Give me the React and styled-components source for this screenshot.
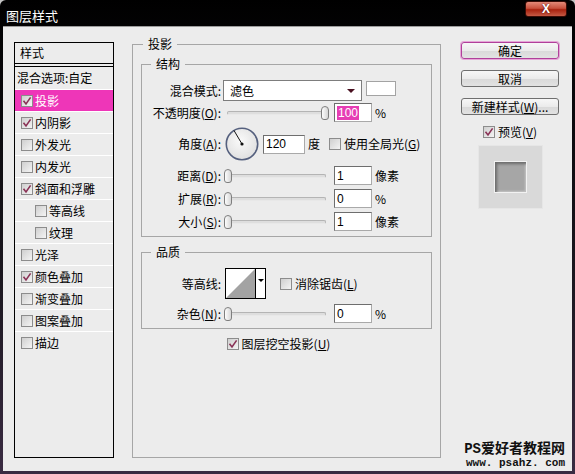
import React from 'react';
import styled, { createGlobalStyle } from 'styled-components';

const GlobalStyle = createGlobalStyle`
  html, body {
    margin: 0;
    padding: 0;
    background: #c4c4c4;
  }
  body {
    font-family: "Liberation Sans", "Noto Sans CJK SC", sans-serif;
    font-size: 12px;
    color: #000;
  }
`;

const Window = styled.div`
  width: 575px;
  height: 474px;
  box-sizing: border-box;
  display: flex;
  flex-direction: column;
  padding: 0 3px 3px;
  background: linear-gradient(180deg, #000 0%, #1c1820 60%, #3a2b42 100%);
  border-radius: 6px 6px 0 0;
  overflow: hidden;
`;

const TitleBar = styled.div`
  height: 27px;
  flex-shrink: 0;
  display: flex;
  justify-content: space-between;
  align-items: flex-start;
  border-bottom: 1px solid #9c9c9c;
  box-sizing: border-box;
`;

const Title = styled.span`
  color: #fff;
  font-family: "Noto Sans CJK SC", sans-serif;
  font-size: 13px;
  line-height: 16px;
  padding: 8px 0 0 3px;
`;

const CloseButton = styled.div`
  width: 42px;
  height: 16px;
  margin: 1px 5px 0 0;
  box-sizing: border-box;
  border: 1px solid #3a0c06;
  border-radius: 3px;
  background: linear-gradient(180deg, #e48a78 0%, #c8503c 45%, #a8220f 55%, #c55a44 100%);
  color: #fff;
  font-family: "Liberation Sans", sans-serif;
  font-weight: bold;
  font-size: 12px;
  line-height: 14px;
  text-align: center;
  text-shadow: 0 0 2px #400;
`;

const Body = styled.div`
  flex: 1;
  display: flex;
  background: #ececec;
  padding: 9px 13px 13px 11px;
  min-height: 0;
`;

const StyleList = styled.div`
  width: 100px;
  box-sizing: border-box;
  margin-top: 6px;
  border: 1px solid #000;
  display: flex;
  flex-direction: column;
  flex-shrink: 0;
`;

const ListHeader = styled.div`
  height: 20px;
  line-height: 20px;
  padding-left: 5px;
  border-bottom: 4px double #000;
  font-family: "Noto Sans CJK SC", sans-serif;
`;

const BlendRow = styled.div`
  height: 22px;
  line-height: 22px;
  padding-left: 2px;
  font-family: "Noto Sans CJK SC", sans-serif;
`;

const ListItem = styled.div`
  height: 22px;
  box-sizing: border-box;
  border-top: 1px solid #fff;
  display: flex;
  align-items: center;
  gap: 2px;
  padding-left: ${p => (p.$sub ? 20 : 6)}px;
  background: ${p => (p.$active ? '#ee36b8' : 'transparent')};
  color: ${p => (p.$active ? '#fff' : '#000')};
  font-family: "Noto Sans CJK SC", sans-serif;
  line-height: 14px;
`;

const BoxWrap = styled.span`
  display: inline-flex;
  align-items: center;
  justify-content: center;
  width: 12px;
  height: 12px;
  box-sizing: border-box;
  flex-shrink: 0;
  border: 1px solid #8c8c8c;
  background: linear-gradient(135deg, #cfcfcf 0%, #f4f4f4 100%);
`;

const Middle = styled.fieldset`
  width: 309px;
  box-sizing: border-box;
  margin: 0 0 0 18px;
  padding: 0 8px;
  border: 1px solid #a6a6a6;
  min-width: 0;
  flex-shrink: 0;
  display: flex;
  flex-direction: column;
`;

const Legend = styled.legend`
  padding: 0 5px;
  margin-left: ${p => p.$offset || 0}px;
  line-height: 16px;
  font-family: "Noto Sans CJK SC", sans-serif;
`;

const Group = styled.fieldset`
  margin: ${p => p.$top}px 0 0;
  padding: 0 6px ${p => p.$bottom}px;
  border: 1px solid #a6a6a6;
  min-width: 0;
  display: flex;
  flex-direction: column;
`;

const Row = styled.div`
  display: flex;
  align-items: center;
  height: ${p => p.$h}px;
  margin-top: ${p => p.$mt}px;
`;

const Label = styled.span`
  width: 73px;
  flex-shrink: 0;
  text-align: right;
  white-space: nowrap;
  font-family: "Noto Sans CJK SC", sans-serif;
  line-height: 14px;
  margin-right: 2px;
`;

const Text = styled.span`
  white-space: nowrap;
  font-family: "Noto Sans CJK SC", sans-serif;
  line-height: 14px;
  margin-left: ${p => p.$ml || 0}px;
`;

const Select = styled.div`
  width: 139px;
  height: 21px;
  box-sizing: border-box;
  border: 1px solid #7d7d7d;
  background: #fff;
  display: flex;
  align-items: center;
  justify-content: space-between;
  padding: 0 6px 0 6px;
  font-family: "Noto Sans CJK SC", sans-serif;
`;

const Arrow = styled.span`
  width: 0;
  height: 0;
  border-left: ${p => p.$size || 4}px solid transparent;
  border-right: ${p => p.$size || 4}px solid transparent;
  border-top: ${p => p.$size || 4}px solid ${p => p.$color || '#4a1020'};
`;

const Swatch = styled.div`
  width: 30px;
  height: 15px;
  margin: -4px 0 0 4px;
  box-sizing: border-box;
  border: 1px solid #a3a3a3;
  background: #fff;
`;

const SliderBox = styled.div`
  position: relative;
  width: 106px;
  height: 14px;
  margin-left: 1px;
  flex-shrink: 0;
`;

const Track = styled.div`
  position: absolute;
  left: 3px;
  right: 4px;
  top: 5px;
  height: 4px;
  box-sizing: border-box;
  border: 1px solid #b4b4b4;
  border-bottom-color: #e8e8e8;
  background: #dedede;
  border-radius: 2px;
`;

const Thumb = styled.div`
  position: absolute;
  top: 0;
  width: 8px;
  height: 14px;
  box-sizing: border-box;
  border: 1px solid #7e7e7e;
  border-radius: 4px 4px 3px 3px;
  background: linear-gradient(90deg, #fdfdfd, #d6d6d6);
`;

const NumInput = styled.div`
  width: ${p => p.$w || 38}px;
  height: 19px;
  box-sizing: border-box;
  margin-left: ${p => p.$ml || 4}px;
  border: 1px solid #6e6e6e;
  border-right-color: #a9a9a9;
  border-bottom-color: #a9a9a9;
  background: #fff;
  padding-left: 2px;
  display: flex;
  align-items: center;
  font-size: 12px;
  line-height: 14px;
  flex-shrink: 0;
`;

const Selected = styled.span`
  background: #e63db4;
  color: #fff;
  padding: 0 1px;
`;

const Unit = styled.span`
  margin-left: 3px;
  font-family: "Noto Sans CJK SC", sans-serif;
  line-height: 14px;
`;

const DialBox = styled.div`
  width: 34px;
  height: 34px;
  margin-left: 2px;
  flex-shrink: 0;
`;

const Contour = styled.div`
  width: 41px;
  height: 31px;
  box-sizing: border-box;
  border: 1px solid #000;
  display: flex;
  background: #fff;
  margin-left: 2px;
`;

const ContourArrow = styled.div`
  width: 10px;
  border-left: 1px solid #000;
  display: flex;
  align-items: center;
  justify-content: center;
  padding-bottom: 6px;
  box-sizing: border-box;
`;

const CheckRow = styled.div`
  display: flex;
  align-items: center;
  justify-content: ${p => (p.$center ? 'center' : 'flex-start')};
  gap: 3px;
  height: ${p => p.$h || 16}px;
  margin-top: ${p => p.$mt || 0}px;
  margin-left: ${p => p.$ml || 0}px;
  padding-right: ${p => p.$pr || 0}px;
`;

const RightCol = styled.div`
  width: 98px;
  margin-left: 20px;
  margin-top: 6px;
  display: flex;
  flex-direction: column;
  flex-shrink: 0;
`;

const Button = styled.div`
  height: 17px;
  box-sizing: border-box;
  margin-top: ${p => p.$mt || 0}px;
  border: 1px solid ${p => (p.$primary ? '#b0409a' : '#6f6f6f')};
  box-shadow: ${p => (p.$primary ? '0 0 0 1px #e6a6d8' : 'none')};
  border-radius: 3px;
  background: linear-gradient(180deg, #f7f7f7 0%, #ebebeb 50%, #d9d9d9 51%, #e2e2e2 100%);
  text-align: center;
  line-height: 15px;
  font-family: "Noto Sans CJK SC", sans-serif;
  white-space: nowrap;
`;

const Preview = styled.div`
  width: 65px;
  height: 64px;
  margin: 6px auto 0;
  box-sizing: border-box;
  background: #d9d9d9;
  border: 1px solid #e6e6e6;
  display: flex;
  align-items: center;
  justify-content: center;
`;

const PreviewSquare = styled.div`
  width: 33px;
  height: 32px;
  box-sizing: border-box;
  background: #a6a6a6;
  border: 1px solid #f2f2f2;
  box-shadow: inset 2px 2px 3px #6a6a6a, inset -1px -1px 2px #c8c8c8;
`;

const Watermark = styled.div`
  margin: auto -6px -11px 0;
  align-self: flex-end;
  text-align: right;
  font-weight: bold;
  color: #111;
  white-space: nowrap;
`;

const MarkTitle = styled.div`
  font-family: "Liberation Mono", "Noto Sans CJK SC", monospace;
  font-size: 14px;
  line-height: 15px;
`;

const MarkUrl = styled.div`
  font-family: "Liberation Mono", monospace;
  font-size: 11px;
  line-height: 12px;
`;

function CheckBox({ checked }) {
  return (
    <BoxWrap>
      {checked && (
        <svg width="10" height="10" viewBox="0 0 10 10">
          <path d="M1.5 4.8 L4 8 L8.6 1.4" stroke="#8a3256" strokeWidth="1.6" fill="none" />
        </svg>
      )}
    </BoxWrap>
  );
}

function Slider({ value }) {
  return (
    <SliderBox>
      <Track />
      <Thumb style={{ left: `${(value / 100) * 97}px` }} />
    </SliderBox>
  );
}

function Dial() {
  return (
    <DialBox>
      <svg width="34" height="34" viewBox="0 0 34 34">
        <defs>
          <radialGradient id="dialbg" cx="45%" cy="40%" r="60%">
            <stop offset="0%" stopColor="#fafafa" />
            <stop offset="100%" stopColor="#e0e0e0" />
          </radialGradient>
        </defs>
        <circle cx="17" cy="17" r="15.7" fill="url(#dialbg)" stroke="#55607e" strokeWidth="1.6" />
        <line x1="17" y1="17" x2="9" y2="3.5" stroke="#111" strokeWidth="1" />
        <circle cx="17" cy="17" r="1.6" fill="#111" />
      </svg>
    </DialBox>
  );
}

const styleItems = [
  { name: '投影', checked: true, active: true },
  { name: '内阴影', checked: true },
  { name: '外发光' },
  { name: '内发光' },
  { name: '斜面和浮雕', checked: true },
  { name: '等高线', sub: true },
  { name: '纹理', sub: true },
  { name: '光泽' },
  { name: '颜色叠加', checked: true },
  { name: '渐变叠加' },
  { name: '图案叠加' },
  { name: '描边' },
];

const sliders = [
  { label: '距离', key: 'D', value: 0, num: '1', unit: '像素', mt: 5 },
  { label: '扩展', key: 'R', value: 0, num: '0', unit: '%', mt: 4 },
  { label: '大小', key: 'S', value: 0, num: '1', unit: '像素', mt: 4 },
];

export default function App() {
  return (
    <>
      <GlobalStyle />
      <Window>
        <TitleBar>
          <Title>图层样式</Title>
          <CloseButton>X</CloseButton>
        </TitleBar>
        <Body>
          <StyleList>
            <ListHeader>样式</ListHeader>
            <BlendRow>混合选项:自定</BlendRow>
            {styleItems.map(item => (
              <ListItem key={item.name} $sub={item.sub} $active={item.active}>
                <CheckBox checked={item.checked} />
                <span>{item.name}</span>
              </ListItem>
            ))}
          </StyleList>

          <Middle>
            <Legend $offset={2}>投影</Legend>
            <Group $top={4} $bottom={5}>
              <Legend $offset={3}>结构</Legend>
              <Row $h={21} $mt={8}>
                <Label>混合模式:</Label>
                <Select>
                  <span>滤色</span>
                  <Arrow />
                </Select>
                <Swatch />
              </Row>
              <Row $h={19} $mt={2}>
                <Label>不透明度(<u>O</u>):</Label>
                <Slider value={100} />
                <NumInput>
                  <Selected>100</Selected>
                </NumInput>
                <Unit>%</Unit>
              </Row>
              <Row $h={34} $mt={5}>
                <Label>角度(<u>A</u>):</Label>
                <Dial />
                <NumInput $w={42} $ml={4}>120</NumInput>
                <Unit>度</Unit>
                <CheckRow $ml={9}>
                  <CheckBox />
                  <Text>使用全局光(<u>G</u>)</Text>
                </CheckRow>
              </Row>
              {sliders.map(s => (
                <Row key={s.key} $h={19} $mt={s.mt}>
                  <Label>
                    {s.label}(<u>{s.key}</u>):
                  </Label>
                  <Slider value={s.value} />
                  <NumInput>{s.num}</NumInput>
                  <Unit>{s.unit}</Unit>
                </Row>
              ))}
            </Group>

            <Group $top={7} $bottom={5}>
              <Legend $offset={3}>品质</Legend>
              <Row $h={31} $mt={8}>
                <Label>等高线:</Label>
                <Contour>
                  <svg width="29" height="29" viewBox="0 0 29 29">
                    <polygon points="0,29 29,0 29,29" fill="#a3a3a3" />
                  </svg>
                  <ContourArrow>
                    <Arrow $size={3} $color="#000" />
                  </ContourArrow>
                </Contour>
                <CheckRow $ml={14}>
                  <CheckBox />
                  <Text>消除锯齿(<u>L</u>)</Text>
                </CheckRow>
              </Row>
              <Row $h={19} $mt={5}>
                <Label>杂色(<u>N</u>):</Label>
                <Slider value={0} />
                <NumInput>0</NumInput>
                <Unit>%</Unit>
              </Row>
            </Group>

            <CheckRow $center $mt={7} $pr={16}>
              <CheckBox checked />
              <Text>图层挖空投影(<u>U</u>)</Text>
            </CheckRow>
          </Middle>

          <RightCol>
            <Button $primary>确定</Button>
            <Button $mt={11}>取消</Button>
            <Button $mt={11}>新建样式(<u>W</u>)...</Button>
            <CheckRow $center $mt={10} $h={14}>
              <CheckBox checked />
              <Text>预览(<u>V</u>)</Text>
            </CheckRow>
            <Preview>
              <PreviewSquare />
            </Preview>
            <Watermark>
              <MarkTitle>PS爱好者教程网</MarkTitle>
              <MarkUrl>www. psahz. com</MarkUrl>
            </Watermark>
          </RightCol>
        </Body>
      </Window>
    </>
  );
}
